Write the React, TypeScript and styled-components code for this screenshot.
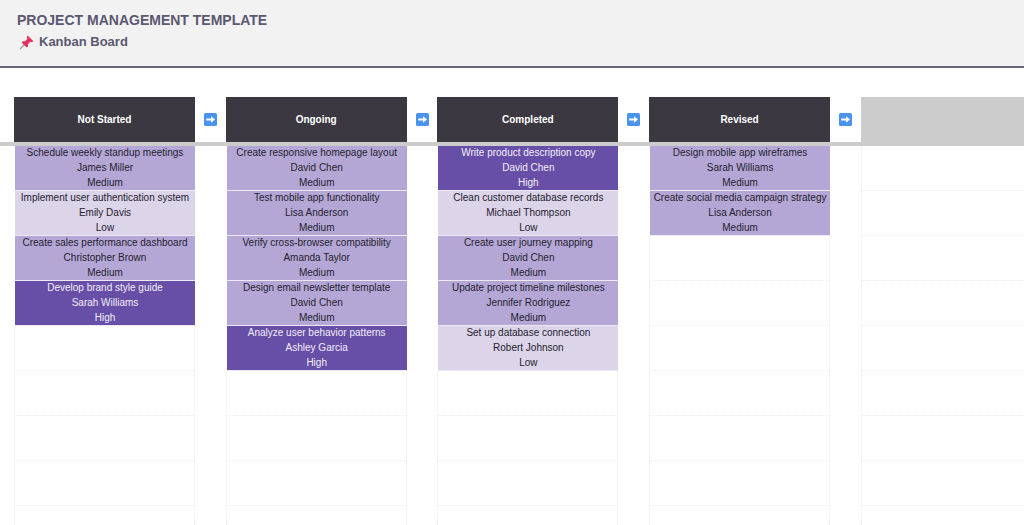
import React from 'react';
import styled, { createGlobalStyle } from 'styled-components';

type Priority = 'Low' | 'Medium' | 'High';

interface Task {
    title: string;
    owner: string;
    priority: Priority;
}

interface Lane {
    name: string;
    tasks: Task[];
}

const lanes: Lane[] = [
    {
        name: 'Not Started',
        tasks: [
            { title: 'Schedule weekly standup meetings', owner: 'James Miller', priority: 'Medium' },
            { title: 'Implement user authentication system', owner: 'Emily Davis', priority: 'Low' },
            { title: 'Create sales performance dashboard', owner: 'Christopher Brown', priority: 'Medium' },
            { title: 'Develop brand style guide', owner: 'Sarah Williams', priority: 'High' },
        ],
    },
    {
        name: 'Ongoing',
        tasks: [
            { title: 'Create responsive homepage layout', owner: 'David Chen', priority: 'Medium' },
            { title: 'Test mobile app functionality', owner: 'Lisa Anderson', priority: 'Medium' },
            { title: 'Verify cross-browser compatibility', owner: 'Amanda Taylor', priority: 'Medium' },
            { title: 'Design email newsletter template', owner: 'David Chen', priority: 'Medium' },
            { title: 'Analyze user behavior patterns', owner: 'Ashley Garcia', priority: 'High' },
        ],
    },
    {
        name: 'Completed',
        tasks: [
            { title: 'Write product description copy', owner: 'David Chen', priority: 'High' },
            { title: 'Clean customer database records', owner: 'Michael Thompson', priority: 'Low' },
            { title: 'Create user journey mapping', owner: 'David Chen', priority: 'Medium' },
            { title: 'Update project timeline milestones', owner: 'Jennifer Rodriguez', priority: 'Medium' },
            { title: 'Set up database connection', owner: 'Robert Johnson', priority: 'Low' },
        ],
    },
    {
        name: 'Revised',
        tasks: [
            { title: 'Design mobile app wireframes', owner: 'Sarah Williams', priority: 'Medium' },
            { title: 'Create social media campaign strategy', owner: 'Lisa Anderson', priority: 'Medium' },
        ],
    },
    { name: '', tasks: [] },
];

const ROWS = 9;

const PinIcon = () => (
    <svg width="15" height="15" viewBox="0 0 15 15">
        <path d="M1 14 L6 9" stroke="#9a9aa0" strokeWidth="1.2" />
        <path d="M8.6 0.6 L14.4 6.2 L12.8 7.2 L11.2 6.8 L9 9.2 L9 11.6 L7.6 12.6 L2.6 7.6 L3.6 6.2 L6 6.2 L8.4 3.8 L7.8 2.2 Z" fill="#e8305f" />
    </svg>
);

const ArrowIcon = () => (
    <svg width="13" height="13" viewBox="0 0 13 13">
        <rect x="0" y="0" width="13" height="13" rx="1.5" fill="#4b94ee" />
        <path d="M2.2 5.4 H7 V3.2 L11 6.5 L7 9.8 V7.6 H2.2 Z" fill="#ffffff" />
    </svg>
);

const App = () => {
    return (
        <Page>
            <GlobalStyle />
            <TopBar>
                <Title>PROJECT MANAGEMENT TEMPLATE</Title>
                <Subtitle>
                    <PinIcon />
                    <span>Kanban Board</span>
                </Subtitle>
            </TopBar>
            <Board>
                <HeaderRow>
                    {lanes.map((lane) => (
                        <HeaderSlot key={lane.name || 'blank'}>
                            <LaneHeader $blank={!lane.name}>{lane.name}</LaneHeader>
                            {lane.name && (
                                <ArrowSlot>
                                    <ArrowIcon />
                                </ArrowSlot>
                            )}
                        </HeaderSlot>
                    ))}
                </HeaderRow>
                <LanesRow>
                    {lanes.map((lane) => (
                        <LaneColumn key={lane.name || 'blank'}>
                            {lane.tasks.map((task) => (
                                <Card key={task.title} $priority={task.priority}>
                                    <CardText>
                                        <div>{task.title}</div>
                                        <div>{task.owner}</div>
                                        <div>{task.priority}</div>
                                    </CardText>
                                </Card>
                            ))}
                            {Array.from({ length: ROWS - lane.tasks.length }).map((_, i) => (
                                <EmptyCell key={i} />
                            ))}
                        </LaneColumn>
                    ))}
                </LanesRow>
            </Board>
        </Page>
    );
};

export default App;

const GlobalStyle = createGlobalStyle`
html, body {
    margin: 0;
    padding: 0;
    background: #ffffff;
    overflow: hidden;
}
`;

const Page = styled.div`
width: 1024px;
height: 525px;
overflow: hidden;
font-family: "Liberation Sans", Arial, sans-serif;
`;

const TopBar = styled.div`
height: 68px;
box-sizing: border-box;
padding: 11px 0 0 17px;
background-color: #f2f2f2;
border-bottom: 2px solid #6a6680;
`;

const Title = styled.div`
font-size: 14px;
line-height: 18px;
font-weight: bold;
color: #5b5870;
`;

const Subtitle = styled.div`
display: flex;
align-items: center;
gap: 5px;
margin-top: 5px;
padding-left: 2px;
font-size: 13px;
line-height: 16px;
font-weight: bold;
color: #5b5870;
`;

const Board = styled.div`
margin-top: 29px;
`;

const HeaderRow = styled.div`
display: flex;
padding-left: 14px;
border-bottom: 4px solid #cccccc;
`;

const HeaderSlot = styled.div`
display: flex;
flex: 0 0 211.7px;
`;

const LaneHeader = styled.div<{ $blank: boolean }>`
flex: 0 0 ${(p) => (p.$blank ? '300px' : '181px')};
height: 45px;
display: flex;
align-items: center;
justify-content: center;
background-color: ${(p) => (p.$blank ? '#cccccc' : '#3c3842')};
color: #ffffff;
font-size: 10px;
font-weight: bold;
`;

const ArrowSlot = styled.div`
flex: 1;
display: flex;
align-items: center;
justify-content: center;
`;

const LanesRow = styled.div`
display: flex;
padding-left: 14px;
`;

const LaneColumn = styled.div`
flex: 0 0 181px;
margin-right: 30.7px;
`;

const priorityColors: Record<Priority, { bg: string; fg: string }> = {
    Low: { bg: '#dcd4e9', fg: '#24222e' },
    Medium: { bg: '#b4a7d6', fg: '#24222e' },
    High: { bg: '#674ea7', fg: '#f2eef8' },
};

const Card = styled.div<{ $priority: Priority }>`
display: flex;
flex-direction: column;
height: 45px;
box-sizing: border-box;
margin-left: 1px;
border-bottom: 1px solid #eeeaf5;
background-color: ${(p) => priorityColors[p.$priority].bg};
color: ${(p) => priorityColors[p.$priority].fg};
font-size: 10px;
line-height: 15px;
text-align: center;
white-space: nowrap;
`;

const CardText = styled.div`
margin-top: -1px;
`;

const EmptyCell = styled.div`
height: 45px;
box-sizing: border-box;
border-left: 1px dotted #ececf2;
border-right: 1px dotted #ececf2;
border-bottom: 1px dotted #ececf2;
`;
